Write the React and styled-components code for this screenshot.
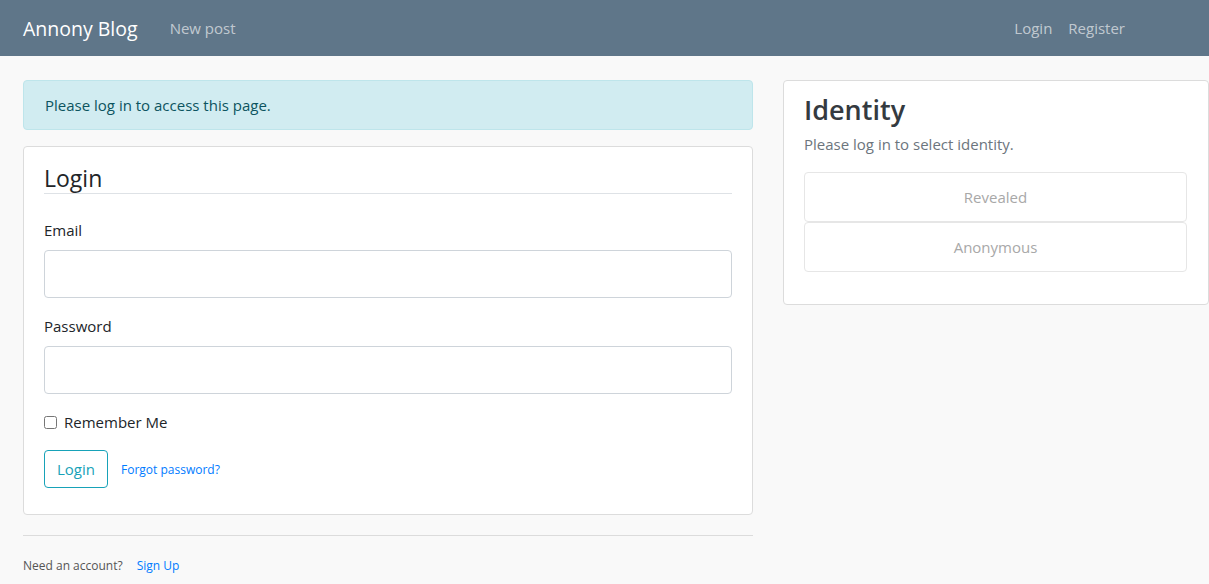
import React from 'react';
import styled, { createGlobalStyle } from 'styled-components';

const GlobalStyle = createGlobalStyle`
  html, body {
    margin: 0;
    padding: 0;
    background: #f9f9f9;
    font-family: "Open Sans", "Noto Sans", sans-serif;
    color: #212529;
    overflow: hidden;
  }
  * { box-sizing: border-box; }
`;

const Navbar = styled.nav`
  height: 56px;
  background-color: #5f7689;
  display: flex;
  align-items: center;
  padding: 0 84px 0 23px;
`;

const Brand = styled.a`
  font-size: 19.5px;
  color: #fff;
  margin-right: 32px;
  text-decoration: none;
`;

const NavLink = styled.a`
  font-size: 15px;
  color: rgba(255, 255, 255, 0.62);
  text-decoration: none;
  margin-right: ${p => p.gap || 0}px;
`;

const Spacer = styled.div`
  flex: 1;
`;

const Page = styled.main`
  display: flex;
  align-items: flex-start;
  gap: 30px;
  padding: 24px 0 0 23px;
`;

const MainColumn = styled.div`
  width: 730px;
  flex-shrink: 0;
`;

const SideColumn = styled.div`
  width: 426px;
  flex-shrink: 0;
`;

const Alert = styled.div`
  height: 50px;
  display: flex;
  align-items: center;
  padding: 0 21px;
  background: #d1ecf1;
  border: 1px solid #bee5eb;
  border-radius: 4px;
  color: #0c5460;
  font-size: 15px;
  margin-bottom: 16px;
`;

const Card = styled.div`
  background: #fff;
  border: 1px solid #dcdcdc;
  border-radius: 4px;
  padding: ${p => p.pad || '21px 20px 20px'};
`;

const Legend = styled.h2`
  font-size: 23px;
  font-weight: 400;
  margin: 0 0 24px;
  padding: 0;
  line-height: 20px;
  height: 26px;
  color: #212529;
  border-bottom: 1px solid #dee2e6;
`;

const Field = styled.div`
  margin-bottom: 16px;
`;

const Label = styled.label`
  display: block;
  font-size: 15px;
  line-height: 24px;
  margin-bottom: 8px;
`;

const Input = styled.input`
  display: block;
  width: 100%;
  height: 48px;
  border: 1px solid #ced4da;
  border-radius: 4px;
  background: #fff;
  font-size: 16px;
  padding: 0 12px;
`;

const CheckRow = styled.div`
  display: flex;
  align-items: center;
  gap: 7px;
  font-size: 15px;
  margin: 16px 0 16px;
  height: 24px;
`;

const Checkbox = styled.input`
  width: 13px;
  height: 13px;
  margin: 0;
`;

const Actions = styled.div`
  display: flex;
  align-items: center;
  gap: 13px;
  margin-bottom: 6px;
`;

const OutlineButton = styled.button`
  height: 38px;
  padding: 0 12px;
  border: 1px solid #17a2b8;
  border-radius: 4px;
  background: transparent;
  color: #17a2b8;
  font-family: inherit;
  font-size: 15px;
`;

const SmallLink = styled.a`
  font-size: 12px;
  color: #007bff;
  text-decoration: none;
  margin-left: ${p => p.gap || 0}px;
`;

const Divider = styled.hr`
  border: 0;
  border-top: 1px solid #dcdcdc;
  margin: 20px 0 18px;
`;

const Footer = styled.div`
  font-size: 12px;
  color: #555;
  display: flex;
  align-items: center;
  height: 22px;
`;

const Title = styled.h1`
  font-size: 27px;
  font-weight: 600;
  margin: 0;
  line-height: 34px;
  color: #343a40;
`;

const Muted = styled.p`
  color: #6c757d;
  font-size: 15px;
  margin: 5px 0 16px;
  line-height: 24px;
`;

const ChoiceList = styled.div`
  display: flex;
  flex-direction: column;
  margin-bottom: 12px;
`;

const Choice = styled.button`
  height: 50px;
  width: 100%;
  background: #fff;
  border: 1px solid #e6e6e6;
  border-radius: 4px;
  color: #a8a8a8;
  font-family: inherit;
  font-size: 15px;
`;

export default function App() {
  return (
    <>
      <GlobalStyle />
      <Navbar>
        <Brand href="#">Annony Blog</Brand>
        <NavLink href="#">New post</NavLink>
        <Spacer />
        <NavLink href="#" gap={16}>Login</NavLink>
        <NavLink href="#">Register</NavLink>
      </Navbar>
      <Page>
        <MainColumn>
          <Alert>Please log in to access this page.</Alert>
          <Card>
            <Legend>Login</Legend>
            <Field>
              <Label>Email</Label>
              <Input type="text" />
            </Field>
            <Field>
              <Label>Password</Label>
              <Input type="password" />
            </Field>
            <CheckRow>
              <Checkbox type="checkbox" />
              <span>Remember Me</span>
            </CheckRow>
            <Actions>
              <OutlineButton>Login</OutlineButton>
              <SmallLink href="#">Forgot password?</SmallLink>
            </Actions>
          </Card>
          <Divider />
          <Footer>
            Need an account?
            <SmallLink href="#" gap={14}>Sign Up</SmallLink>
          </Footer>
        </MainColumn>
        <SideColumn>
          <Card pad="12px 21px 20px 20px">
            <Title>Identity</Title>
            <Muted>Please log in to select identity.</Muted>
            <ChoiceList>
              <Choice>Revealed</Choice>
              <Choice>Anonymous</Choice>
            </ChoiceList>
          </Card>
        </SideColumn>
      </Page>
    </>
  );
}
